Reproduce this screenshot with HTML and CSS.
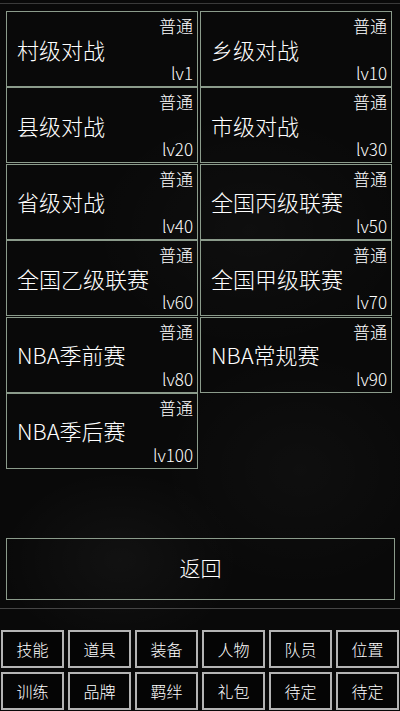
FILE: index.html
```html
<!DOCTYPE html>
<html lang="zh">
<head>
<meta charset="utf-8">
<link rel="stylesheet" href="styles.css">
</head>
<body>
<div class="page">
  <div class="topline"></div>
  <div class="levels">
    <div class="card"><span class="tag">普通</span><span class="title">村级对战</span><span class="lv">lv1</span></div>
    <div class="card"><span class="tag">普通</span><span class="title">乡级对战</span><span class="lv">lv10</span></div>
    <div class="card"><span class="tag">普通</span><span class="title">县级对战</span><span class="lv">lv20</span></div>
    <div class="card"><span class="tag">普通</span><span class="title">市级对战</span><span class="lv">lv30</span></div>
    <div class="card"><span class="tag">普通</span><span class="title">省级对战</span><span class="lv">lv40</span></div>
    <div class="card"><span class="tag">普通</span><span class="title">全国丙级联赛</span><span class="lv">lv50</span></div>
    <div class="card"><span class="tag">普通</span><span class="title">全国乙级联赛</span><span class="lv">lv60</span></div>
    <div class="card"><span class="tag">普通</span><span class="title">全国甲级联赛</span><span class="lv">lv70</span></div>
    <div class="card"><span class="tag">普通</span><span class="title">NBA季前赛</span><span class="lv">lv80</span></div>
    <div class="card"><span class="tag">普通</span><span class="title">NBA常规赛</span><span class="lv">lv90</span></div>
    <div class="card"><span class="tag">普通</span><span class="title">NBA季后赛</span><span class="lv">lv100</span></div>
  </div>
  <div class="back">返回</div>
  <div class="divider"></div>
  <div class="menu">
    <div class="btn">技能</div>
    <div class="btn">道具</div>
    <div class="btn">装备</div>
    <div class="btn">人物</div>
    <div class="btn">队员</div>
    <div class="btn">位置</div>
    <div class="btn">训练</div>
    <div class="btn">品牌</div>
    <div class="btn">羁绊</div>
    <div class="btn">礼包</div>
    <div class="btn">待定</div>
    <div class="btn">待定</div>
  </div>
</div>
</body>
</html>
```

FILE: styles.css
```css
html, body {
  margin: 0;
  padding: 0;
}
body {
  width: 400px;
  height: 711px;
  overflow: hidden;
  background-color: #090909;
  background-image:
    radial-gradient(ellipse 120px 90px at 120px 560px, rgba(255,255,255,0.035), transparent),
    radial-gradient(ellipse 140px 120px at 300px 470px, rgba(255,255,255,0.025), transparent),
    radial-gradient(ellipse 160px 120px at 250px 230px, rgba(255,255,255,0.025), transparent);
  font-family: "Noto Sans CJK SC", "Noto Sans", sans-serif;
  font-weight: 300;
  color: #ffffff;
}
.page {
  display: flex;
  flex-direction: column;
}
.topline {
  margin-top: 3px;
  height: 1px;
  background: #3a3a3a;
}
.levels {
  margin-top: 7px;
  padding-left: 6px;
  display: grid;
  grid-template-columns: 192px 192px;
  grid-auto-rows: 76px;
  row-gap: 0.4px;
  column-gap: 2px;
}
.card {
  box-sizing: border-box;
  border: 1px solid #8b9b8b;
  display: flex;
  flex-direction: column;
  justify-content: space-between;
  padding: 4px 4px 3px 10px;
}
.tag {
  align-self: flex-end;
  font-size: 17px;
  line-height: 20px;
}
.title {
  font-size: 22px;
  line-height: 24px;
  margin-top: -2px;
}
.lv {
  align-self: flex-end;
  font-size: 17px;
  line-height: 20px;
}
.back {
  box-sizing: border-box;
  margin: 69px 0 0 6px;
  width: 389px;
  height: 62px;
  border: 1px solid #8b9b8b;
  display: flex;
  align-items: center;
  justify-content: center;
  font-size: 21px;
  padding-bottom: 3px;
}
.divider {
  margin-top: 8px;
  height: 1px;
  background: #454545;
}
.menu {
  margin-top: 21px;
  padding-left: 1px;
  display: grid;
  grid-template-columns: repeat(6, 63px);
  grid-auto-rows: 38px;
  column-gap: 4px;
  row-gap: 4px;
}
.btn {
  box-sizing: border-box;
  border: 2px solid #b4b4b4;
  background: #050505;
  display: flex;
  align-items: center;
  justify-content: center;
  font-size: 16px;
}
```
